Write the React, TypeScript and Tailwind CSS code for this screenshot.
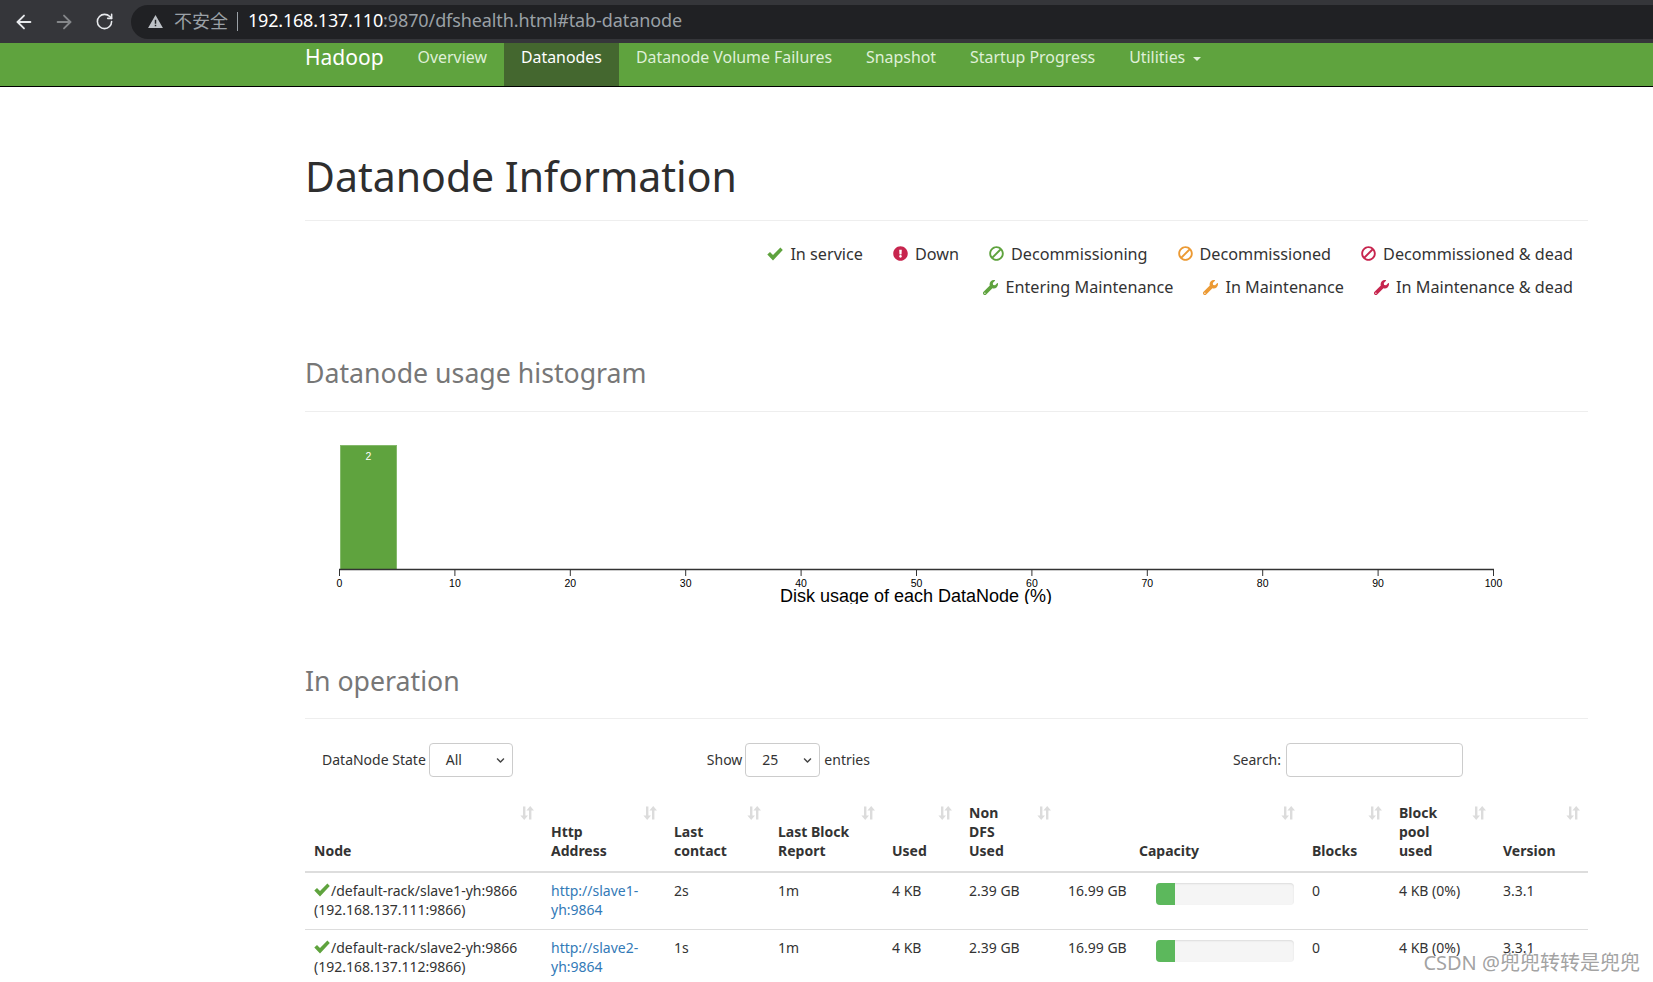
import { ArrowLeft, ArrowRight, RotateCw } from "lucide-react";
import { FaBan, FaExclamationCircle, FaWrench, FaChevronDown } from "react-icons/fa";

const GREEN = "text-[#5fa33e]";
const ORANGE = "text-[#ec9a34]";
const RED = "text-[#c7254e]";

function Check({ className }: { className?: string }) {
  return (
    <svg viewBox="0 0 16 14" className={className} fill="currentColor">
      <path d="M0.3 7.6 L3 5 L6 8 L13.4 0.4 L15.8 2.9 L6 13.6 Z" />
    </svg>
  );
}

function SortIcon() {
  return (
    <svg viewBox="0 0 14 14" className="absolute top-[9px] right-[8px] w-[14px] h-[14px] text-[#dcdcdc]" fill="currentColor">
      <path d="M3 0.5h2.4v9H8L4.2 14 0.4 9.5H3z" />
      <path d="M9 13.5h2.4v-9H14L10.2 0 6.4 4.5H9z" />
    </svg>
  );
}

const LEGEND_TOP = [
  { icon: <Check className={`w-[16px] h-[14px] ${GREEN}`} />, label: "In service" },
  { icon: <FaExclamationCircle className={`w-[15px] h-[15px] ${RED}`} />, label: "Down" },
  { icon: <FaBan className={`w-[15px] h-[15px] -scale-x-100 ${GREEN}`} />, label: "Decommissioning" },
  { icon: <FaBan className={`w-[15px] h-[15px] -scale-x-100 ${ORANGE}`} />, label: "Decommissioned" },
  { icon: <FaBan className={`w-[15px] h-[15px] -scale-x-100 ${RED}`} />, label: "Decommissioned & dead" },
];

const LEGEND_BOTTOM = [
  { icon: <FaWrench className={`w-[15px] h-[15px] ${GREEN}`} />, label: "Entering Maintenance" },
  { icon: <FaWrench className={`w-[15px] h-[15px] ${ORANGE}`} />, label: "In Maintenance" },
  { icon: <FaWrench className={`w-[15px] h-[15px] ${RED}`} />, label: "In Maintenance & dead" },
];

const NODES = [
  { name: "slave1-yh", ip: "192.168.137.111", link: "slave1", contact: "2s" },
  { name: "slave2-yh", ip: "192.168.137.112", link: "slave2", contact: "1s" },
];

function Legend({ items }: { items: typeof LEGEND_TOP }) {
  return (
    <div className="flex justify-end gap-[30px] h-[33.5px] items-center">
      {items.map((it) => (
        <div key={it.label} className="flex items-center gap-[7px]">
          {it.icon}
          <span>{it.label}</span>
        </div>
      ))}
    </div>
  );
}

function Histogram() {
  const ticks = [0, 10, 20, 30, 40, 50, 60, 70, 80, 90, 100];
  return (
    <svg width="1283" height="159" className="block" fontFamily="'Liberation Sans', sans-serif">
      <rect x="35.5" y="0.5" width="56" height="124" fill="#5fa33e" stroke="#84b96b" strokeWidth="1" />
      <text x="63.5" y="15" textAnchor="middle" fontSize="10.5" fill="#fff">2</text>
      <line x1="34" y1="124.5" x2="1189" y2="124.5" stroke="#333" strokeWidth="1.5" />
      {ticks.map((t) => {
        const x = 34.5 + t * 11.54;
        return (
          <g key={t}>
            <line x1={x} y1="124" x2={x} y2="131" stroke="#333" strokeWidth="1" />
            <text x={x} y="142" textAnchor="middle" fontSize="10.5" fill="#000">{t}</text>
          </g>
        );
      })}
      <text x="611" y="157" textAnchor="middle" fontSize="18" fill="#000">Disk usage of each DataNode (%)</text>
    </svg>
  );
}

export default function App() {
  return (
    <div className="relative h-[982px] w-[1653px] overflow-hidden bg-white text-[16px] leading-[20px] text-[#333] font-['Noto_Sans','Noto_Sans_CJK_SC',sans-serif]">
      {/* browser bar */}
      <div className="flex items-center h-[43px] bg-[#35363a] pl-[13px]">
        <ArrowLeft className="w-[22px] h-[22px] text-[#e8eaed]" />
        <ArrowRight className="w-[22px] h-[22px] text-[#85878a] ml-[18px]" />
        <RotateCw className="w-[19px] h-[19px] text-[#e8eaed] ml-[20px]" />
        <div className="flex items-center flex-1 h-[34px] ml-[17px] pl-[17px] pb-[3px] rounded-l-[17px] bg-[#202124] text-[18px]">
          <svg viewBox="0 0 16 14" className="w-[15px] h-[13px] mt-[2px] text-[#bdc1c6]" fill="currentColor">
            <path d="M8 0 16 14H0zM7.2 5v4.5h1.6V5zM7.2 10.5v1.6h1.6v-1.6z" fillRule="evenodd" />
          </svg>
          <span className="ml-[11px] text-[#9aa0a6] font-['Noto_Sans_CJK_SC',sans-serif]">不安全</span>
          <span className="ml-[9px] w-px h-[19px] mt-[3px] bg-[#9aa0a6]" />
          <span className="ml-[10px] text-white tracking-[-0.2px]">192.168.137.110</span>
          <span className="text-[#9aa0a6] tracking-[-0.1px]">:9870/dfshealth.html#tab-datanode</span>
        </div>
      </div>

      {/* navbar */}
      <nav className="flex h-[44px] pl-[305px] bg-[#5fa33e] border-b border-black text-[15.9px]">
        <span className="text-[21px] text-white mr-[17px] leading-[28px]">Hadoop</span>
        {["Overview", "Datanodes", "Datanode Volume Failures", "Snapshot", "Startup Progress"].map((n) => (
          <span
            key={n}
            className={n === "Datanodes" ? "px-[17px] pt-[3px] leading-[22px] bg-[#44672f] text-white" : "px-[17px] pt-[3px] leading-[22px] text-[#dff0d8]"}
          >
            {n}
          </span>
        ))}
        <span className="flex items-start gap-[8px] px-[17px] pt-[3px] leading-[22px] text-[#dff0d8]">
          Utilities
          <span className="mt-[11px] border-x-[4px] border-t-[4px] border-x-transparent border-t-[#dff0d8]" />
        </span>
      </nav>

      <main className="ml-[305px] w-[1283px]">
        <h1 className="pt-[63px] pb-[18px] text-[41px] leading-[52px] text-[#2e2e2e] border-b border-[#eee]">Datanode Information</h1>

        <div className="pt-[16px] pr-[15px] text-[16.2px]">
          <Legend items={LEGEND_TOP} />
          <Legend items={LEGEND_BOTTOM} />
        </div>

        <h2 className="mt-[52px] pb-[21px] text-[26.7px] leading-[34px] text-[#777] border-b border-[#eee]">Datanode usage histogram</h2>
        <div className="mt-[33px]">
          <Histogram />
        </div>

        <h2 className="mt-[60px] pb-[20px] text-[26.7px] leading-[34px] text-[#777] border-b border-[#eee]">In operation</h2>

        <div className="relative flex items-center h-[34px] mt-[24px] text-[14px]">
          <span className="ml-[17px]">DataNode State</span>
          <div className="flex items-center justify-between ml-[3px] w-[84px] h-[34px] pl-[16px] pr-[7px] border border-[#ccc] rounded-[4px]">
            All
            <FaChevronDown className="w-[9px] h-[9px] text-[#444]" />
          </div>
          <span className="ml-[194px]">Show</span>
          <div className="flex items-center justify-between ml-[3px] w-[75px] h-[34px] pl-[16px] pr-[7px] border border-[#ccc] rounded-[4px]">
            25
            <FaChevronDown className="w-[9px] h-[9px] text-[#444]" />
          </div>
          <span className="ml-[4px]">entries</span>
          <span className="ml-auto mr-[5px]">Search:</span>
          <div className="w-[177px] h-[34px] mr-[125px] border border-[#ccc] rounded-[4px]" />
        </div>

        <table className="mt-[20px] w-[1283px] table-fixed border-collapse text-[14px] leading-[19px]">
          <colgroup>
            {[237, 123, 104, 114, 77, 99, 88, 156, 87, 104, 94].map((w, i) => (
              <col key={i} style={{ width: w }} />
            ))}
          </colgroup>
          <thead>
            <tr className="border-b-2 border-[#ddd] font-bold text-left align-bottom">
              {["Node", "Http\nAddress", "Last\ncontact", "Last Block\nReport", "Used", "Non\nDFS\nUsed"].map((h) => (
                <th key={h} className="relative px-[9px] pt-[6px] pb-[11px] whitespace-pre-line font-bold">
                  {h}
                  <SortIcon />
                </th>
              ))}
              <th colSpan={2} className="relative pl-[80px] pb-[11px] font-bold">
                Capacity
                <SortIcon />
              </th>
              <th className="relative px-[9px] pb-[11px] font-bold">
                Blocks
                <SortIcon />
              </th>
              <th className="relative px-[9px] pb-[11px] whitespace-pre-line font-bold">
                {"Block\npool\nused"}
                <SortIcon />
              </th>
              <th className="relative px-[9px] pb-[11px] font-bold">
                Version
                <SortIcon />
              </th>
            </tr>
          </thead>
          <tbody>
            {NODES.map((n) => (
              <tr key={n.name} className="border-b border-[#ddd] align-top">
                <td className="px-[9px] pt-[8px] pb-[10px]">
                  <Check className={`inline-block w-[16px] h-[14px] mr-[1px] align-[-1px] ${GREEN}`} />
                  /default-rack/{n.name}:9866
                  <br />({n.ip}:9866)
                </td>
                <td className="px-[9px] pt-[8px] text-[#337ab7]">
                  http://{n.link}-
                  <br />yh:9864
                </td>
                <td className="px-[9px] pt-[8px]">{n.contact}</td>
                <td className="px-[9px] pt-[8px]">1m</td>
                <td className="px-[9px] pt-[8px]">4 KB</td>
                <td className="px-[9px] pt-[8px]">2.39 GB</td>
                <td className="px-[9px] pt-[8px]">16.99 GB</td>
                <td className="px-[9px] pt-[10px]">
                  <div className="h-[22px] rounded-[4px] bg-[#f5f5f5] overflow-hidden shadow-[inset_0_1px_2px_rgba(0,0,0,0.1)]">
                    <div className="h-full w-[19px] bg-[#5cb85c]" />
                  </div>
                </td>
                <td className="px-[9px] pt-[8px]">0</td>
                <td className="px-[9px] pt-[8px]">4 KB (0%)</td>
                <td className="px-[9px] pt-[8px]">3.3.1</td>
              </tr>
            ))}
          </tbody>
        </table>
      </main>

      <div className="absolute right-[13px] bottom-[7px] text-[20px] leading-[24px] text-[#8a8a8a]/80 font-['Noto_Sans','Noto_Sans_CJK_SC',sans-serif]">
        CSDN @兜兜转转是兜兜
      </div>
    </div>
  );
}
